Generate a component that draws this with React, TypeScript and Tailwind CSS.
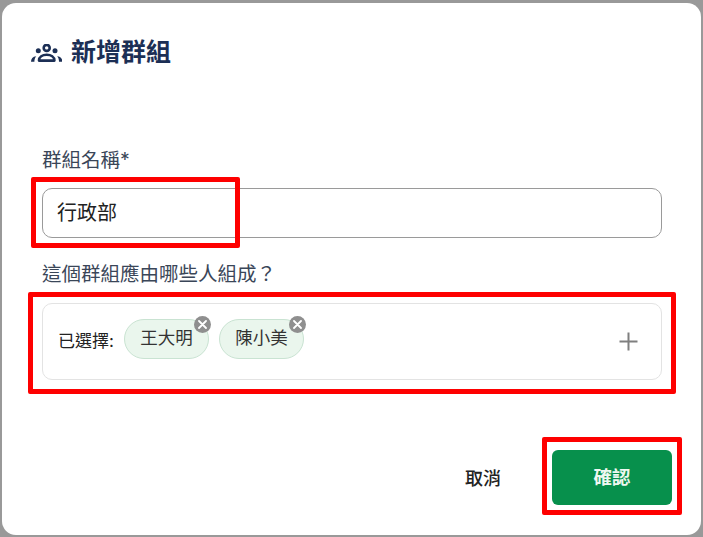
const font = "font-['Inter','Noto_Sans_CJK_TC',sans-serif]";

function GroupsIcon() {
  return (
    <svg width="31" height="18" viewBox="0 0 31 18" fill="#1c2f55">
      <circle cx="15.7" cy="3.9" r="3" fill="none" stroke="#1c2f55" strokeWidth="2.6" />
      <circle cx="7.300" cy="6.700" r="2.500" />
      <circle cx="24" cy="6.700" r="2.500" />
      <path d="M8 16.600c0-3.800 3.400-5.800 7.700-5.800s7.700 2 7.700 5.800z" fill="none" stroke="#1c2f55" strokeWidth="2.600" strokeLinejoin="round" />
      <path d="M0 17.800c0-3.200 1.700-5.300 5.200-5.600-1.300 1.600-1.800 3.500-1.800 5.600zM31.400 17.800c0-3.200-1.700-5.300-5.200-5.600 1.300 1.600 1.800 3.500 1.800 5.600z" />
    </svg>
  );
}

function Chip({ name }: { name: string }) {
  return (
    <div className="relative flex h-[40px] w-[85px] items-center justify-center rounded-full border border-[#c9e3d2] bg-[#eaf6ed] text-[17.5px] text-[#333]">
      {name}
      <span className="absolute right-[-3px] top-[-4px] flex h-[17px] w-[17px] items-center justify-center rounded-full bg-[#8f8f8f]">
        <svg width="9" height="9" viewBox="0 0 9 9" stroke="white" strokeWidth="1.8" strokeLinecap="round">
          <path d="M1 1l7 7M8 1l-7 7" />
        </svg>
      </span>
    </div>
  );
}

export default function App() {
  return (
    <div className={`${font} h-[537px] w-[703px] overflow-hidden bg-[#999999] pb-[2px] pl-[2px] pr-[2px] pt-[3px]`}>
      <div className="relative flex h-full flex-col rounded-[14px] bg-white">
        {/* title */}
        <div className="ml-[29px] mt-[32px] flex h-[36px] items-center gap-[9px] text-[25px] font-bold text-[#1c2f55]">
          <GroupsIcon />
          新增群組
        </div>

        <div className="ml-[40px] mt-[74px] w-[620px]">
          <p className="text-[19.5px] leading-[30px] text-[#3a4658]">群組名稱*</p>
          <div className="mt-[13px] flex h-[50px] items-center rounded-[10px] border border-[#9a9a9a] pl-[14px] text-[20px] text-[#222]">
            行政部
          </div>
          <p className="mt-[21px] text-[19.5px] leading-[30px] text-[#3a4658]">這個群組應由哪些人組成？</p>
          <div className="mt-[14px] flex h-[77px] items-center rounded-[10px] border border-[#e3e3e3] pl-[15px] pr-[23px]">
            <span className="mr-[10px] text-[17px] text-[#222]">已選擇:</span>
            <div className="mb-[6px] flex gap-[10px]">
              <Chip name="王大明" />
              <Chip name="陳小美" />
            </div>
            <svg className="mb-[1px] ml-auto" width="19" height="19" viewBox="0 0 19 19" stroke="#7f7f7f" strokeWidth="2">
              <path d="M9.500 0.500v18M0.500 9.500h18" />
            </svg>
          </div>
        </div>

        <div className="ml-[40px] mt-[70px] flex w-[630px] items-center justify-end">
          <button className="mr-[51px] pt-[1px] text-[18px] font-medium text-[#222]">取消</button>
          <button className="h-[55px] w-[120px] rounded-[6px] bg-[#07904c] pt-[1px] text-[18.5px] font-bold text-[#eef8f1]">確認</button>
        </div>

        {/* red annotation boxes */}
        <div className="absolute left-[29px] top-[174px] h-[71px] w-[209px] rounded-[2px] border-[5px] border-[#fe0000]" />
        <div className="absolute left-[26px] top-[289px] h-[102px] w-[648px] rounded-[2px] border-[5px] border-[#fe0000]" />
        <div className="absolute left-[540px] top-[434px] h-[78px] w-[140px] rounded-[2px] border-[5px] border-[#fe0000]" />
      </div>
    </div>
  );
}
